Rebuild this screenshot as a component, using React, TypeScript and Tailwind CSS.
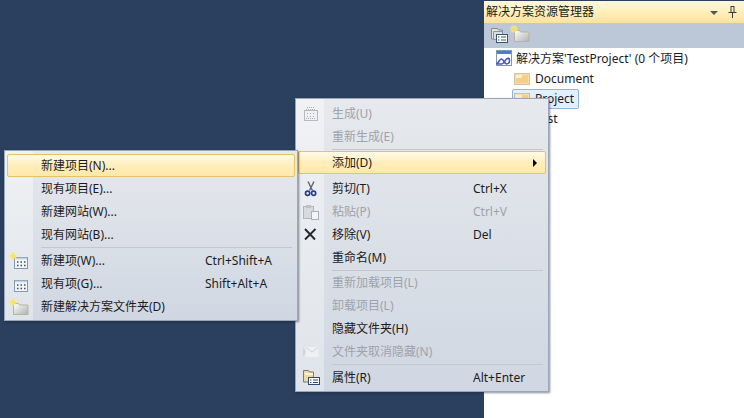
import type { ReactNode } from "react";

const font = "font-['Noto_Sans','Noto_Sans_CJK_SC',sans-serif]";

const BuildIcon = () => (
  <svg width="16" height="16" viewBox="0 0 16 16">
    <rect x="1.5" y="4.5" width="13" height="10" fill="#eef0f3" stroke="#b4b9c2" />
    <path d="M4 1.5h8M3 3.5h10M4 7.5h1M7 7.5h1M10 7.5h1M4 10.5h1M7 10.5h1M10 10.5h1M3 12.5h10" stroke="#a9aeb8" strokeDasharray="1 1" />
  </svg>
);

const ScissorsIcon = () => (
  <svg width="16" height="16" viewBox="0 0 16 16">
    <path d="M5 0.5l4.5 9M11 0.5L6.5 9.5" stroke="#5b6470" strokeWidth="1.4" />
    <circle cx="4.6" cy="12.2" r="2.1" fill="none" stroke="#23408f" strokeWidth="1.7" />
    <circle cx="10.6" cy="12.2" r="2.1" fill="none" stroke="#23408f" strokeWidth="1.7" />
  </svg>
);

const PasteIcon = () => (
  <svg width="16" height="16" viewBox="0 0 16 16">
    <rect x="0.5" y="2.5" width="10" height="12" fill="#d7dade" stroke="#b2b6bc" />
    <rect x="3" y="1" width="5" height="3" fill="#bcc1c8" />
    <rect x="8.5" y="7.5" width="7" height="8" fill="#f3f4f6" stroke="#aab0b8" />
  </svg>
);

const RemoveIcon = () => (
  <svg width="16" height="16" viewBox="0 0 16 16">
    <path d="M2 2l10 10.5M12.5 2L2 12.5" stroke="#23272e" strokeWidth="1.9" />
  </svg>
);

const HiddenFolderIcon = () => (
  <svg width="16" height="16" viewBox="0 0 16 16">
    <path d="M0 4l4 4-4 4z" fill="#cfd4da" />
    <rect x="2.5" y="3" width="13" height="10" fill="#eef0f2" />
    <path d="M3 3.5l6 4.5 6-4.5" fill="none" stroke="#d0d4d9" />
  </svg>
);

const PropsIcon = () => (
  <svg width="17" height="17" viewBox="0 0 17 17">
    <path d="M0.5 1.5h5l1 1.5h4v10h-10z" fill="#ecd9ac" stroke="#85795e" />
    <path d="M2 5h8" stroke="#fff6dc" strokeWidth="2" />
    <rect x="5.5" y="8.5" width="11" height="7" fill="#fff" stroke="#2f4a6c" />
    <path d="M7 11h1.5M10 11h5M7 13.5h1.5M10 13.5h5" stroke="#2f4a6c" />
  </svg>
);

const ListFolderIcon = () => (
  <svg width="17" height="15" viewBox="0 0 17 15">
    <path d="M0.5 0.5h6l1 1.5h4v9h-11z" fill="#e6e3d2" stroke="#7d8a96" />
    <path d="M2.5 3.5h9v8h-9z" fill="#d7dde4" stroke="#8a97a6" />
    <rect x="5.5" y="6.5" width="11" height="8" fill="#fff" stroke="#3b5675" />
    <path d="M7 9h1.5M10 9h5M7 12h1.5M10 12h5" stroke="#3b5675" />
  </svg>
);

const Star = () => (
  <g>
    <circle cx="4" cy="4" r="3.6" fill="#fbeb8a" opacity="0.7" />
    <path d="M4 0.5v7M0.5 4h7" stroke="#f6e04c" strokeWidth="1.1" />
  </g>
);

const GridIcon = ({ star }: { star?: boolean }) => (
  <svg width="20" height="18" viewBox="0 0 20 18">
    <rect x="5.5" y="5.5" width="13" height="11" fill="#f1f4f8" stroke="#8698ae" />
    <path d="M6 6.5h12" stroke="#c3d2e3" strokeWidth="1.5" />
    <path d="M8 10h1.5M11.5 10H13M15 10h1.5M8 13.5h1.5M11.5 13.5H13M15 13.5h1.5" stroke="#3f4f62" strokeWidth="1.5" />
    {star && <Star />}
  </svg>
);

const NewFolderIcon = () => (
  <svg width="20" height="18" viewBox="0 0 20 18">
    <defs>
      <linearGradient id="newFolderFill" x1="0" y1="0" x2="1" y2="1">
        <stop offset="0" stopColor="#ffffff" />
        <stop offset="1" stopColor="#aeb2b0" />
      </linearGradient>
    </defs>
    <path d="M4.5 5.5h5l1 1.5h8.5v9.5h-14.5z" fill="url(#newFolderFill)" stroke="#b9b49a" />
    <Star />
  </svg>
);

const FolderIcon = () => (
  <svg width="17" height="14" viewBox="0 0 17 14">
    <rect x="0.5" y="1.5" width="15" height="11" fill="#f7dfa8" stroke="#a8946a" strokeDasharray="1 1" />
    <rect x="2" y="3" width="12" height="8" fill="#f4cf8a" />
    <rect x="2" y="3" width="6" height="3" fill="#fbeecb" />
  </svg>
);

const SolutionIcon = () => (
  <svg width="18" height="18" viewBox="0 0 18 18">
    <rect x="1.5" y="0.5" width="15" height="15" fill="#fff" stroke="#7f96b8" />
    <rect x="2" y="1" width="14" height="3" fill="#4a7ed0" />
    <path d="M1.5 14c2-1 3-5 5-5s3 5 5 5 3-2 3-4-2-2-3-1-3 5-5 5-3 0-5 0z" fill="none" stroke="#4b55c4" strokeWidth="1.6" />
  </svg>
);

const PinIcon = () => (
  <svg width="9" height="12" viewBox="0 0 9 12">
    <path d="M2.5 0.5h4M3 1v5M6 1v5M0.5 6.5h8M4.5 7v5" fill="none" stroke="#3a3a3a" />
  </svg>
);

const Separator = () => (
  <div className="flex h-[3px] shrink-0 items-center pl-[34px] pr-[3px]">
    <div className="h-px w-full bg-[#c3c8d0]" />
  </div>
);

type RowProps = {
  label: string;
  icon?: ReactNode;
  shortcut?: string;
  disabled?: boolean;
  active?: boolean;
  arrow?: boolean;
  shortcutWidth?: string;
  gutter: string;
};

const MenuRow = ({ label, icon, shortcut, disabled, active, arrow, shortcutWidth, gutter }: RowProps) => (
  <div
    className={`relative flex h-[23px] shrink-0 items-center rounded-[2px] border text-xs ${
      active
        ? "border-[#e5c365] bg-gradient-to-b from-[#fffbe8] via-[#ffeebb] to-[#ffe9a8]"
        : "border-transparent"
    } ${disabled ? "text-[#9ea3ab]" : "text-[#1c1c1c]"}`}
  >
    <div className={`flex w-[33px] shrink-0 items-center ${gutter}`}>{icon}</div>
    <span className="flex-1 whitespace-nowrap">{label}</span>
    {shortcut && <span className={`whitespace-nowrap ${shortcutWidth}`}>{shortcut}</span>}
    {arrow && <div className="mr-[8px] h-0 w-0 border-y-[4px] border-l-[4px] border-y-transparent border-l-black" />}
  </div>
);

const menuBox =
  "absolute flex flex-col border border-[#9ba7b7] bg-gradient-to-b from-[#e6e9ed] to-[#d0d7e2] p-[2px] shadow-[1px_1px_2px_rgba(20,30,50,0.5)]";

const Gutter = () => (
  <div className="absolute inset-y-0 left-0 w-[28px] bg-gradient-to-b from-[#f0f2f4] to-[#dfe4ea]" />
);

export default function App() {
  const rightGutter = "pl-[4px]";
  const leftGutter = "pl-[1px]";
  const sw = "w-[72px]";
  const swLeft = "w-[89px]";

  return (
    <div className={`relative flex h-[418px] w-[744px] overflow-hidden bg-[#2b3f5e] ${font}`}>
      <div className="flex-1" />
      <div className="flex w-[260px] flex-col bg-white">
        <div className="h-[1px] bg-[#2b3f5e]" />
        <div className="flex h-[22px] items-center justify-between bg-gradient-to-b from-[#fff8df] via-[#ffefba] to-[#ffe29a] pb-[1px] pl-[2px] pr-[7px] text-xs text-[#1c1c1c]">
          <span>解决方案资源管理器</span>
          <div className="flex items-center gap-[10px]">
            <div className="mt-[2px] h-0 w-0 border-x-[4px] border-t-[4px] border-x-transparent border-t-[#555]" />
            <PinIcon />
          </div>
        </div>
        <div className="flex h-[25px] items-center gap-[4px] bg-[#bcc7d8] pl-[7px]">
          <ListFolderIcon />
          <div className="-ml-[2px] -mt-[4px]">
            <NewFolderIcon />
          </div>
        </div>
        <div className="flex flex-col pt-[1px] text-xs text-[#1c1c1c]">
          <div className="flex h-[20px] items-center gap-[3px] pl-[11px]">
            <SolutionIcon />
            <span>解决方案'TestProject' (0 个项目)</span>
          </div>
          <div className="flex h-[20px] items-center gap-[4px] pl-[30px]">
            <FolderIcon />
            <span>Document</span>
          </div>
          <div className="ml-[28px] flex h-[20px] w-[67px] items-center gap-[4px] rounded-[2px] border border-[#8fb4dd] bg-[#e4effb] pl-[1px]">
            <FolderIcon />
            <span>Project</span>
          </div>
          <div className="flex h-[20px] items-center pl-[30px]">
            <span className="pl-[21px]">Test</span>
          </div>
        </div>
      </div>

      {/* right context menu */}
      <div className={`${menuBox} left-[295px] top-[98px] h-[294px] w-[254px]`}>
        <Gutter />
        <div className="h-px shrink-0" />
        <MenuRow gutter={rightGutter} label="生成(U)" icon={<BuildIcon />} disabled />
        <MenuRow gutter={rightGutter} label="重新生成(E)" disabled />
        <Separator />
        <MenuRow gutter={rightGutter} label="添加(D)" active arrow />
        <div className="h-[3px] shrink-0" />
        <MenuRow gutter={rightGutter} label="剪切(T)" icon={<ScissorsIcon />} shortcut="Ctrl+X" shortcutWidth={sw} />
        <MenuRow gutter={rightGutter} label="粘贴(P)" icon={<PasteIcon />} shortcut="Ctrl+V" shortcutWidth={sw} disabled />
        <MenuRow gutter={rightGutter} label="移除(V)" icon={<RemoveIcon />} shortcut="Del" shortcutWidth={sw} />
        <MenuRow gutter={rightGutter} label="重命名(M)" />
        <div className="flex h-[2px] shrink-0 items-center pl-[34px] pr-[3px]">
          <div className="h-px w-full bg-[#c3c8d0]" />
        </div>
        <MenuRow gutter={rightGutter} label="重新加载项目(L)" disabled />
        <MenuRow gutter={rightGutter} label="卸载项目(L)" disabled />
        <MenuRow gutter={rightGutter} label="隐藏文件夹(H)" />
        <MenuRow gutter={rightGutter} label="文件夹取消隐藏(N)" icon={<HiddenFolderIcon />} disabled />
        <Separator />
        <MenuRow gutter={rightGutter} label="属性(R)" icon={<PropsIcon />} shortcut="Alt+Enter" shortcutWidth={sw} />
      </div>

      {/* left submenu */}
      <div className={`${menuBox} left-[4px] top-[150px] h-[171px] w-[294px]`}>
        <Gutter />
        <div className="h-px shrink-0" />
        <MenuRow gutter={leftGutter} label="新建项目(N)..." active />
        <MenuRow gutter={leftGutter} label="现有项目(E)..." />
        <MenuRow gutter={leftGutter} label="新建网站(W)..." />
        <MenuRow gutter={leftGutter} label="现有网站(B)..." />
        <Separator />
        <MenuRow gutter={leftGutter} label="新建项(W)..." icon={<GridIcon star />} shortcut="Ctrl+Shift+A" shortcutWidth={swLeft} />
        <MenuRow gutter={leftGutter} label="现有项(G)..." icon={<GridIcon />} shortcut="Shift+Alt+A" shortcutWidth={swLeft} />
        <MenuRow gutter={leftGutter} label="新建解决方案文件夹(D)" icon={<NewFolderIcon />} />
      </div>
    </div>
  );
}
